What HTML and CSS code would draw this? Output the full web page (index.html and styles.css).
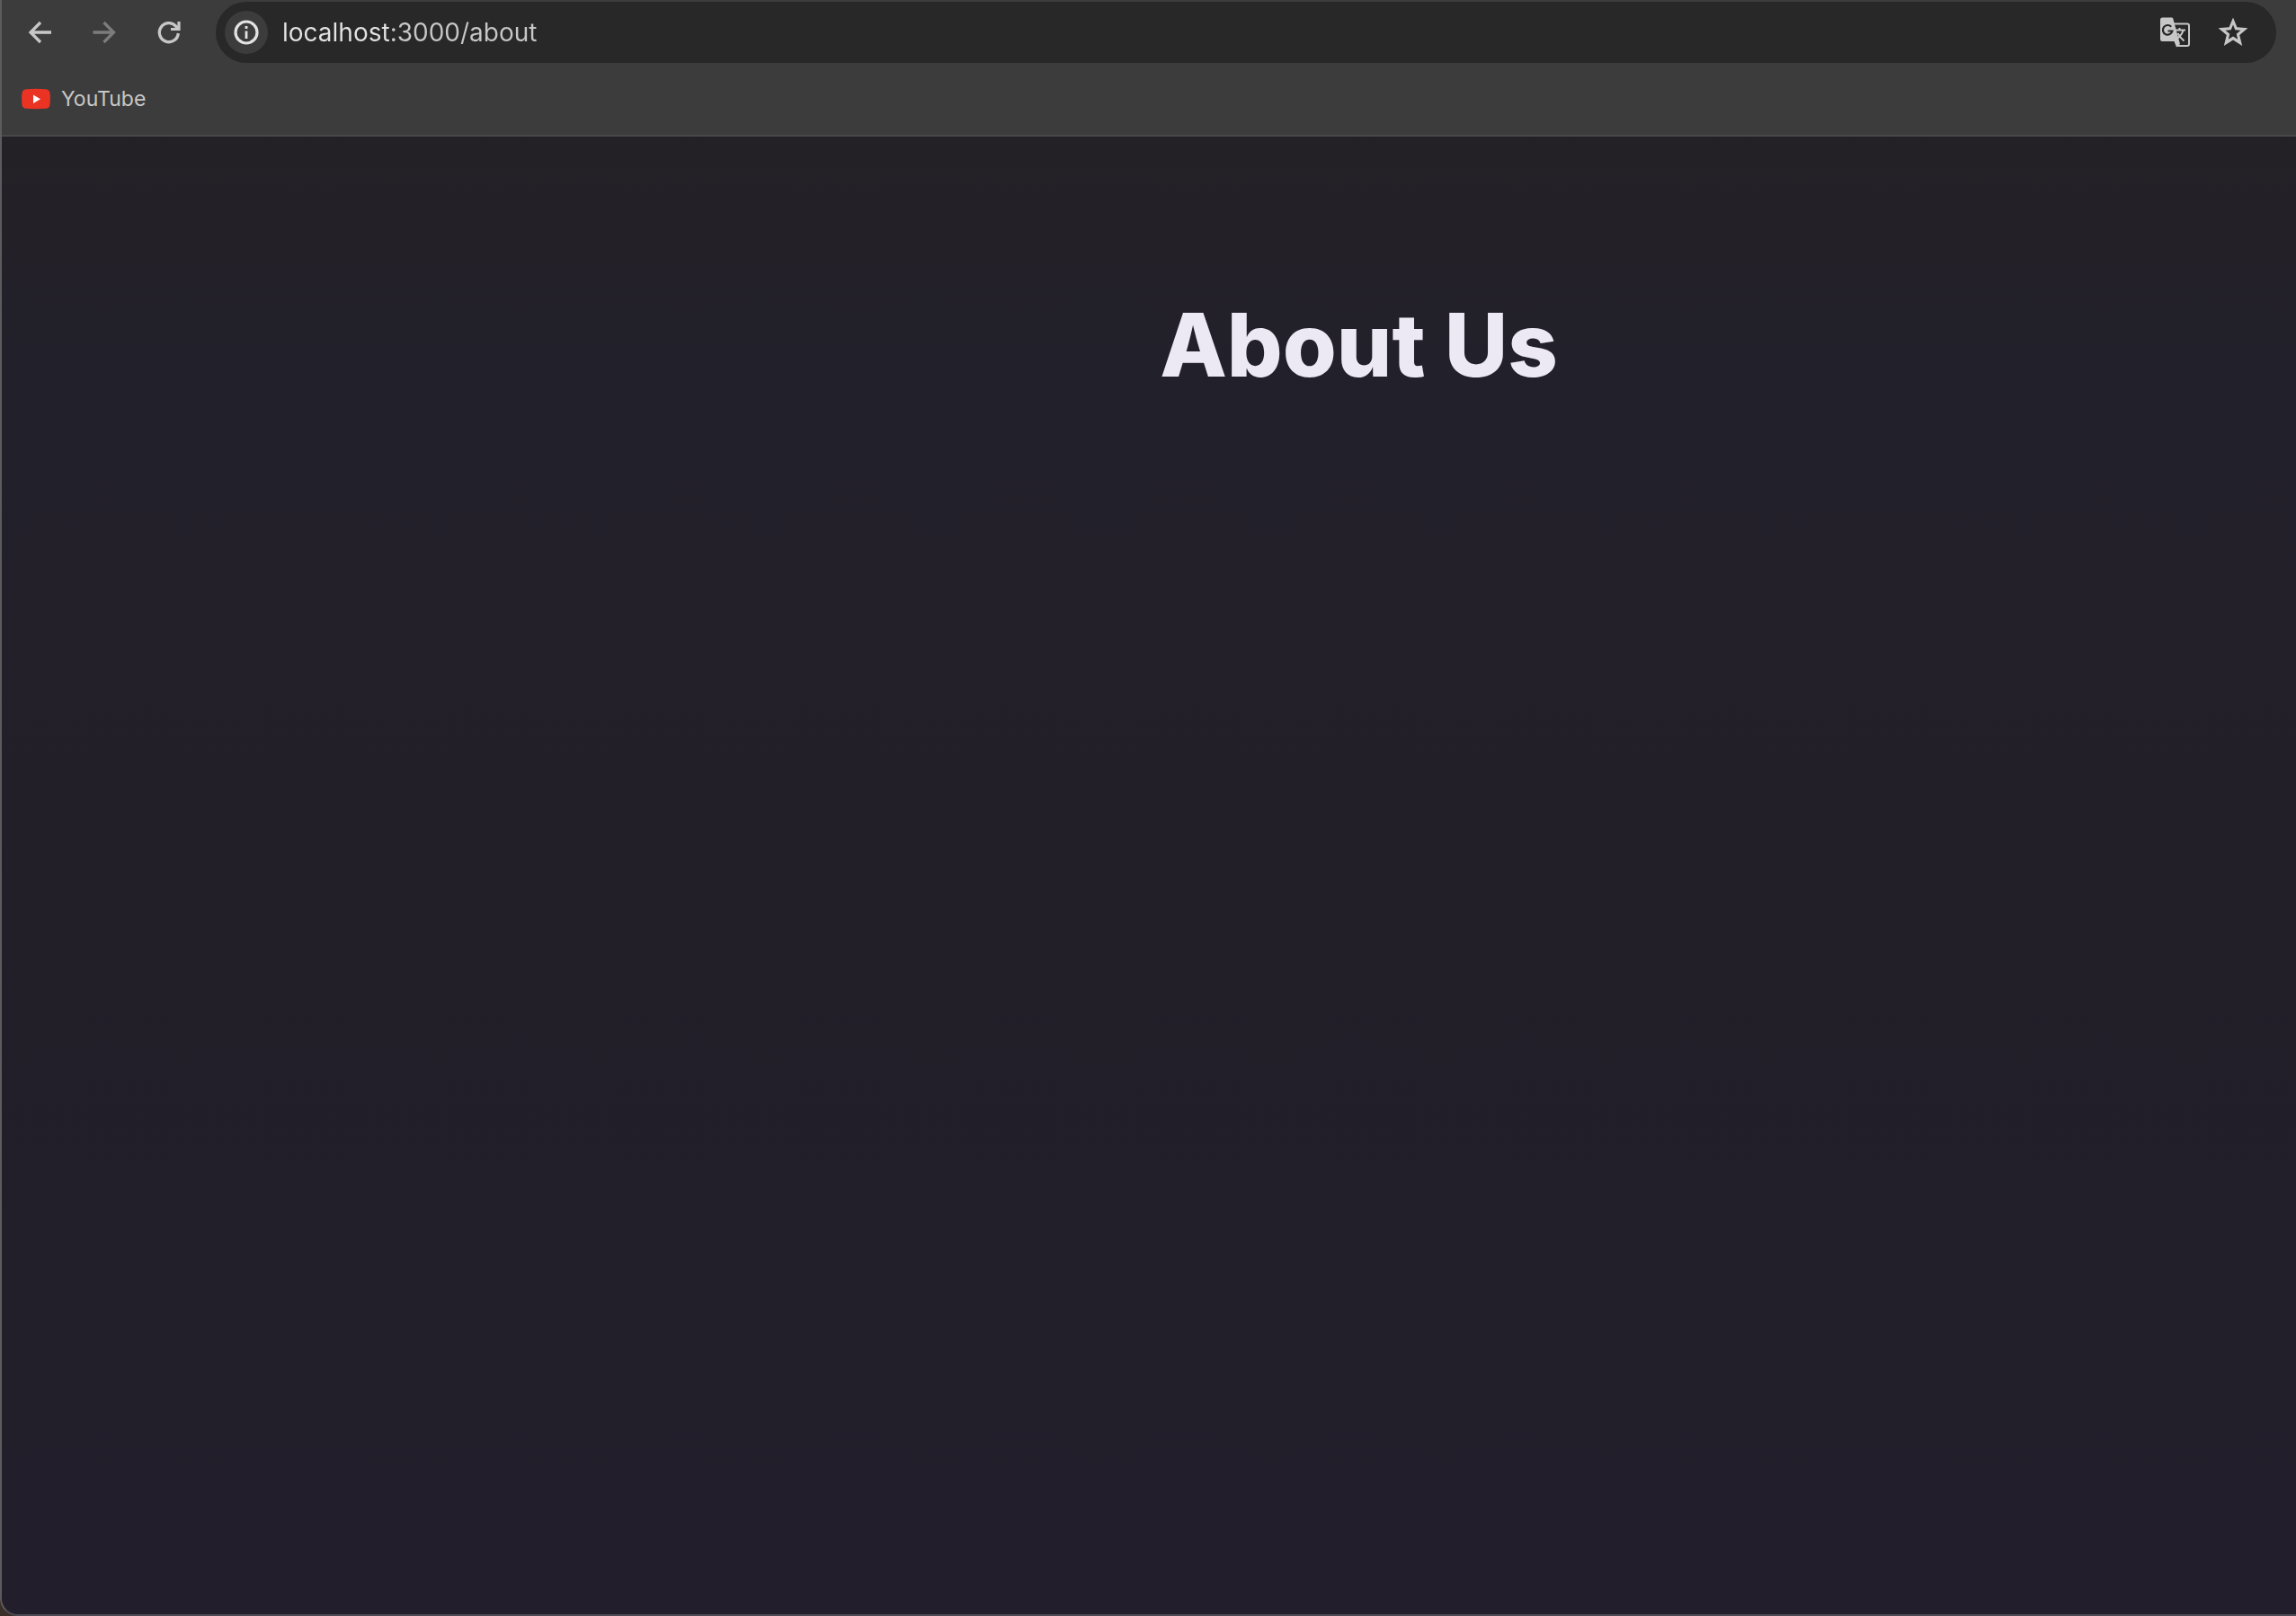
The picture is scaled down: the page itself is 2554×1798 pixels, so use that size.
FILE: index.html
```html
<!DOCTYPE html>
<html lang="en">
<head>
<meta charset="utf-8">
<title>About Us</title>
<link rel="stylesheet" href="styles.css">
</head>
<body>
<div class="window">
  <header class="chrome">
    <div class="toolbar">
      <nav class="nav" aria-label="History">
        <button class="icon-button" type="button" aria-label="Back">
          <svg width="40" height="40" viewBox="0 0 40 40" fill="none" stroke="currentColor" stroke-width="3.300"><path d="M33 20H10.500M21 9L10 20l11 11"/></svg>
        </button>
        <button class="icon-button" type="button" aria-label="Forward" disabled>
          <svg width="40" height="40" viewBox="0 0 40 40" fill="none" stroke="currentColor" stroke-width="3.300"><path d="M7.500 20H30M19.500 9L30.500 20 19.500 31"/></svg>
        </button>
        <button class="icon-button" type="button" aria-label="Reload">
          <svg width="40" height="40" viewBox="0 0 40 40" fill="none" stroke="currentColor" stroke-width="3.300"><path d="M30.300 21A10.500 10.500 0 1 1 27.500 13L30.500 16"/><path d="M31 8v8.500H22" stroke-width="3.200"/></svg>
        </button>
      </nav>
      <form class="omnibox">
        <button class="info" type="button" aria-label="View site information">
          <svg width="28" height="28" viewBox="0 0 28 28" fill="none" stroke="currentColor"><circle cx="14" cy="14" r="12" stroke-width="3.200"/><path d="M14 12.500v8.500M14 7v3" stroke-width="2.800"/></svg>
        </button>
        <input class="url" type="text" aria-label="Address" value="localhost:3000/about">
        <button class="action" type="button" aria-label="Translate this page">
          <svg width="34" height="34" viewBox="0 0 34 34">
            <path d="M15 7.500h15a2 2 0 0 1 2 2V30a2 2 0 0 1-2 2H18" fill="none" stroke="currentColor" stroke-width="2"/>
            <path d="M2.500 0.500h10.300a1.500 1.500 0 0 1 1.400 1L22 30l-4 3.500-2.500-6.500H2.500a2.500 2.500 0 0 1-2.500-2.500V3a2.500 2.500 0 0 1 2.500-2.500Z" fill="currentColor"/>
            <path d="M12.200 10.800a5.300 5.300 0 1 0 1.200 4.700H8.500" fill="none" stroke="#282828" stroke-width="2.200"/>
            <path d="M16.500 14.500H28M21.500 12v2.500M25.500 14.500c-1 4-4 7.500-7 9.500M19.500 18c1.500 3 4 6 7 8.500" fill="none" stroke="currentColor" stroke-width="2"/>
          </svg>
        </button>
        <button class="action" type="button" aria-label="Bookmark this tab">
          <svg width="34" height="34" viewBox="0 0 34 34"><path fill="currentColor" fill-rule="evenodd" d="M17 0.500l4.400 10.800 12 .9-9.200 7.700L27.200 32 17 25.500 6.800 32l3-12.100L.6 12.200l12-.9ZM17 8.600l-2.300 5.600-6.200.5 4.800 4-1.500 6.100 5.200-3.300 5.200 3.300-1.500-6.100 4.800-4-6.200-.5Z"/></svg>
        </button>
      </form>
    </div>
    <nav class="bookmarks" aria-label="Bookmarks">
      <a class="bookmark" href="https://www.youtube.com/">
        <svg width="32" height="24" viewBox="0 0 32 24"><path d="M5 1.200Q16 .4 27 1.200 31 1.500 31.500 5.500 32.300 12 31.500 18.500 31 22.500 27 22.800 16 23.600 5 22.800 1 22.500.5 18.500-.3 12 .5 5.500 1 1.500 5 1.200Z" fill="#ea3323"/><path d="M13 7.500v9.500l8-4.700Z" fill="#fff"/></svg>
        <span>YouTube</span>
      </a>
    </nav>
  </header>
  <main class="page">
    <h1 class="title">About Us</h1>
  </main>
</div>
</body>
</html>
```
FILE: styles.css
```css
* {
  box-sizing: border-box;
}

body {
  margin: 0;
  background: #3a2f28;
  font-family: Inter, "Liberation Sans", sans-serif;
}

.window {
  display: flex;
  flex-direction: column;
  min-height: 100vh;
  overflow: hidden;
  border-left: 2px solid #5c5b5e;
  border-bottom: 2px solid #4e4a55;
  border-bottom-left-radius: 20px;
}

button {
  display: flex;
  align-items: center;
  justify-content: center;
  padding: 0;
  border: 0;
  background: none;
  color: #c7c7c7;
}

.chrome {
  background: #3c3c3c;
  border-bottom: 2px solid #484848;
}

.toolbar {
  display: flex;
  align-items: center;
  gap: 32px;
  padding: 2px 22px 0 22px;
}

.nav {
  display: flex;
  gap: 32px;
}

.icon-button {
  width: 40px;
  height: 40px;
}

.icon-button:disabled {
  color: #7c7c7c;
}

.omnibox {
  display: flex;
  flex: 1;
  align-items: center;
  gap: 30px;
  height: 68px;
  padding: 0 31px 0 10px;
  border-radius: 34px;
  background: #282828;
}

.info {
  width: 48px;
  height: 48px;
  border-radius: 50%;
  background: #3c3c3c;
  color: #e3e3e3;
}

.url {
  flex: 1;
  min-width: 0;
  height: 40px;
  margin-left: -14px;
  padding: 0;
  border: 0;
  outline: 0;
  background: linear-gradient(to right, #e3e3e3 119px, #c7c7c7 119px);
  -webkit-background-clip: text;
  background-clip: text;
  color: transparent;
  font: 400 28px/40px Inter, "Liberation Sans", sans-serif;
}

.action {
  width: 34px;
  height: 34px;
}

.bookmarks {
  display: flex;
  height: 80px;
  padding: 0 22px;
}

.bookmark {
  display: flex;
  align-items: center;
  gap: 12px;
  color: #c7c7c7;
  font-size: 23px;
  line-height: 32px;
  text-decoration: none;
}

.page {
  flex: 1;
  padding: 176px 0 0 467px;
  background: linear-gradient(#242126, #22202a 15%, #221f29 50%, #221e2b);
}

.title {
  margin: 0;
  color: #ece8f4;
  font-size: 97px;
  font-weight: 800;
  line-height: 112px;
  text-align: center;
}
```
